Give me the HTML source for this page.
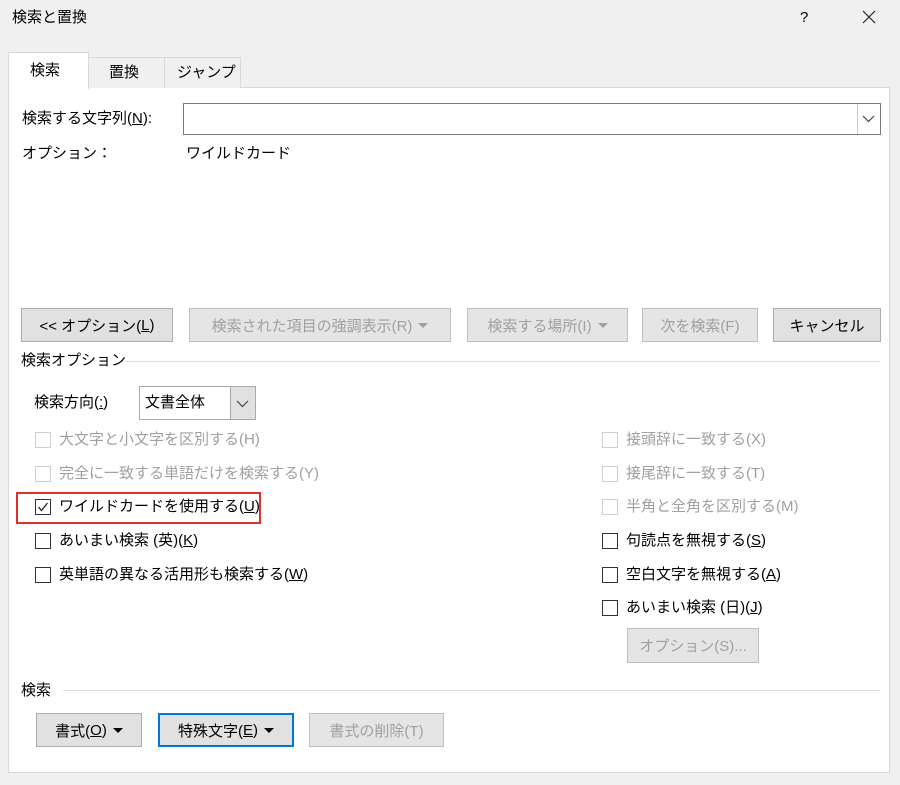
<!DOCTYPE html>
<html><head><meta charset="utf-8"><style>
*{box-sizing:border-box;margin:0;padding:0}
body{width:900px;height:785px;background:#f0f0f0;position:relative;overflow:hidden;font-family:"Liberation Sans","Noto Sans CJK JP",sans-serif;font-size:15px;color:#000}
.a{position:absolute;white-space:nowrap;line-height:20px}
.dis{color:#a0a0a0}
.btn{position:absolute;background:#e1e1e1;border:1px solid #adadad;display:flex;align-items:center;justify-content:center;white-space:nowrap;font-size:15px}
.btn.d{color:#a0a0a0;border-color:#bfbfbf;background:#e5e5e5}
.cb{position:absolute;width:16px;height:16px;border:1px solid #333;background:#fff}
.cb.d{border-color:#cfcfcf}
.tri{display:inline-block;width:0;height:0;border-left:5px solid transparent;border-right:5px solid transparent;border-top:5px solid #000;margin-left:6px;vertical-align:middle}
.tri.g{border-top-color:#a0a0a0}
u{text-decoration:underline}
</style></head><body>
<div class="a" style="left:12px;top:8px">検索と置換</div>
<div class="a" style="left:800px;top:8px">?</div>
<svg style="position:absolute;left:862px;top:10px" width="14" height="14"><path d="M1 1 L13 13 M13 1 L1 13" stroke="#222" stroke-width="1.2"/></svg>

<div style="position:absolute;left:8px;top:87px;width:882px;height:686px;background:#fff;border:1px solid #d9d9d9"></div>
<div style="position:absolute;left:8px;top:52px;width:81px;height:37px;background:#fff;border:1px solid #d9d9d9;border-bottom:none"></div>
<div class="a" style="left:30px;top:61px">検索</div>
<div style="position:absolute;left:88px;top:57px;width:77px;height:31px;background:#f0f0f0;border:1px solid #d9d9d9;border-bottom:none"></div>
<div class="a" style="left:109px;top:63px">置換</div>
<div style="position:absolute;left:164px;top:57px;width:77px;height:31px;background:#f0f0f0;border:1px solid #d9d9d9;border-bottom:none"></div>
<div class="a" style="left:177px;top:63px">ジャンプ</div>

<div class="a" style="left:22px;top:109px">検索する文字列(<u>N</u>):</div>
<div style="position:absolute;left:183px;top:103px;width:698px;height:32px;border:1px solid #7a7a7a;background:#fff"></div>
<div style="position:absolute;left:857px;top:104px;width:23px;height:30px;border-left:1px solid #ccc;background:#fff"></div>
<svg style="position:absolute;left:862px;top:114px" width="13" height="10"><path d="M1 2 L6.5 7.5 L12 2" stroke="#444" fill="none" stroke-width="1.2"/></svg>
<div class="a" style="left:22px;top:144px">オプション：</div>
<div class="a" style="left:186px;top:144px">ワイルドカード</div>

<div class="btn" style="left:21px;top:308px;width:152px;height:34px">&lt;&lt; オプション(<u>L</u>)</div>
<div class="btn d" style="left:189px;top:308px;width:262px;height:34px">検索された項目の強調表示(R)<span class="tri g"></span></div>
<div class="btn d" style="left:467px;top:308px;width:161px;height:34px">検索する場所(I)<span class="tri g"></span></div>
<div class="btn d" style="left:642px;top:308px;width:116px;height:34px">次を検索(F)</div>
<div class="btn" style="left:773px;top:308px;width:108px;height:34px">キャンセル</div>

<div class="a" style="left:21px;top:351px">検索オプション</div>
<div style="position:absolute;left:126px;top:361px;width:754px;height:1px;background:#dcdcdc"></div>
<div class="a" style="left:34px;top:393px">検索方向(<u>:</u>)</div>
<div style="position:absolute;left:139px;top:386px;width:117px;height:34px;border:1px solid #aaa;background:#fff"></div>
<div style="position:absolute;left:230px;top:387px;width:25px;height:32px;background:#e1e1e1;border-left:1px solid #aaa"></div>
<svg style="position:absolute;left:236px;top:399px" width="13" height="10"><path d="M1 2 L6.5 7.5 L12 2" stroke="#444" fill="none" stroke-width="1.2"/></svg>
<div class="a" style="left:145px;top:393px">文書全体</div>

<div class="cb d" style="left:35px;top:432px"></div><div class="a dis" style="left:59px;top:430px">大文字と小文字を区別する(H)</div>
<div class="cb d" style="left:35px;top:466px"></div><div class="a dis" style="left:59px;top:464px">完全に一致する単語だけを検索する(Y)</div>
<div style="position:absolute;left:16px;top:492px;width:245px;height:32px;border:2px solid #e0302a"></div>
<div class="cb" style="left:35px;top:499px"></div>
<svg style="position:absolute;left:36px;top:500px" width="14" height="14"><path d="M2.5 7 L5.5 10.5 L11.5 3" stroke="#222" fill="none" stroke-width="1.3"/></svg>
<div class="a" style="left:59px;top:497px">ワイルドカードを使用する(<u>U</u>)</div>
<div class="cb" style="left:35px;top:533px"></div><div class="a" style="left:59px;top:531px">あいまい検索 (英)(<u>K</u>)</div>
<div class="cb" style="left:35px;top:567px"></div><div class="a" style="left:59px;top:565px">英単語の異なる活用形も検索する(<u>W</u>)</div>

<div class="cb d" style="left:602px;top:432px"></div><div class="a dis" style="left:626px;top:430px">接頭辞に一致する(X)</div>
<div class="cb d" style="left:602px;top:466px"></div><div class="a dis" style="left:626px;top:464px">接尾辞に一致する(T)</div>
<div class="cb d" style="left:602px;top:499px"></div><div class="a dis" style="left:626px;top:497px">半角と全角を区別する(M)</div>
<div class="cb" style="left:602px;top:533px"></div><div class="a" style="left:626px;top:531px">句読点を無視する(<u>S</u>)</div>
<div class="cb" style="left:602px;top:567px"></div><div class="a" style="left:626px;top:565px">空白文字を無視する(<u>A</u>)</div>
<div class="cb" style="left:602px;top:600px"></div><div class="a" style="left:626px;top:598px">あいまい検索 (日)(<u>J</u>)</div>
<div class="btn d" style="left:627px;top:628px;width:132px;height:35px">オプション(S)...</div>

<div class="a" style="left:21px;top:681px">検索</div>
<div style="position:absolute;left:63px;top:690px;width:817px;height:1px;background:#dcdcdc"></div>
<div class="btn" style="left:36px;top:713px;width:106px;height:34px">書式(<u>O</u>)<span class="tri"></span></div>
<div class="btn" style="left:158px;top:713px;width:136px;height:34px;border:2px solid #0078d7">特殊文字(<u>E</u>)<span class="tri"></span></div>
<div class="btn d" style="left:309px;top:713px;width:135px;height:34px">書式の削除(T)</div>
</body></html>
